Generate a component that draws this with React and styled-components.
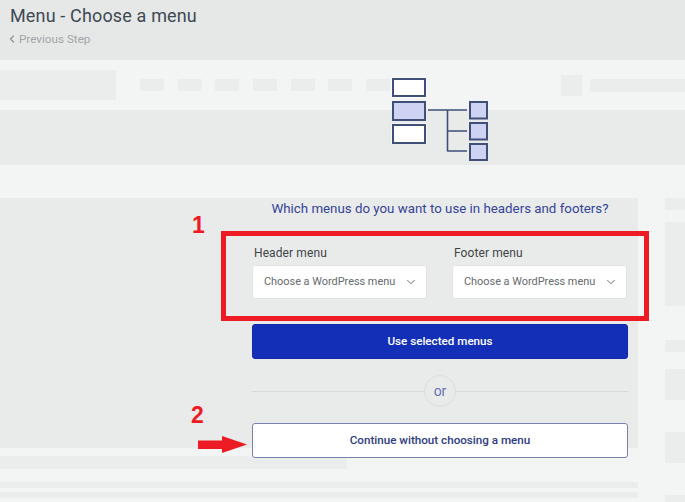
import React from "react";
import styled, { createGlobalStyle } from "styled-components";
import { ChevronDown, ChevronLeft } from "lucide-react";

const Global = createGlobalStyle`
  html, body { margin: 0; padding: 0; background: #f3f5f5; }
  * { box-sizing: border-box; }
`;

const Page = styled.div`
  position: relative;
  width: 685px;
  height: 502px;
  overflow: hidden;
  background: #f3f5f5;
  font-family: Roboto, "Liberation Sans", sans-serif;
`;

const Header = styled.header`
  height: 60px;
  padding: 5px 0 0 10px;
  background: #e6e8e8;
`;

const Title = styled.h1`
  margin: 0;
  font-size: 18px;
  line-height: 21px;
  font-weight: 400;
  letter-spacing: 0.15px;
  color: #3e4852;
`;

const BackLink = styled.a`
  display: flex;
  align-items: center;
  gap: 1px;
  margin: 4px 0 0 -4px;
  font-size: 11.7px;
  line-height: 18px;
  color: #a2a5a7;
`;

const SkeletonRow = styled.div`
  display: flex;
  align-items: center;
  height: 50px;
`;

const Skeleton = styled.div`
  flex: none;
  width: ${(p) => p.$w}px;
  height: ${(p) => p.$h}px;
  background: #ebeded;
`;

const NavGroup = styled.div`
  display: flex;
  gap: 13.7px;
  margin: 0 auto 0 24px;
`;

const RightGroup = styled.div`
  display: flex;
  align-items: center;
  gap: 8px;
`;

const Band = styled.div`
  height: 55px;
  background: #e9ebeb;
`;

const Body = styled.div`
  display: flex;
  margin-top: 33px;
`;

const LeftColumn = styled.div`
  flex: none;
  width: 638px;
`;

const Panel = styled.section`
  height: 250px;
  padding: 0 10px 0 252px;
  background: #e9ebeb;
`;

const Question = styled.p`
  margin: 0;
  padding-top: 3px;
  text-align: center;
  font-size: 13.3px;
  line-height: 16px;
  color: #35439a;
`;

const Fields = styled.div`
  display: grid;
  grid-template-columns: 175px 175px;
  column-gap: 25px;
  margin-top: 29px;
`;

const Field = styled.div`
  display: flex;
  flex-direction: column;
`;

const FieldLabel = styled.label`
  padding-left: 2px;
  font-size: 12px;
  line-height: 14px;
  letter-spacing: 0.1px;
  color: #3f4346;
  margin-bottom: 5px;
`;

const Select = styled.div`
  display: flex;
  align-items: center;
  justify-content: space-between;
  height: 34px;
  padding: 0 8px 1px 11px;
  border: 1px solid #e2e4e4;
  border-radius: 3px;
  background: #fff;
  font-size: 10.9px;
  white-space: nowrap;
  color: #666a6c;
`;

const Button = styled.button`
  display: block;
  position: relative;
  width: 100%;
  height: 35px;
  padding-bottom: 3px;
  border-radius: 3px;
  font-family: inherit;
  font-size: 11.65px;
  font-weight: 500;
  border: 1px solid ${(p) => (p.$primary ? "#1029a8" : "#7883ad")};
  background: ${(p) => (p.$primary ? "#132fb8" : "#fff")};
  color: ${(p) => (p.$primary ? "#fff" : "#2e3b82")};
`;

const PrimaryButton = styled(Button)`
  margin-top: 25px;
`;

const Divider = styled.div`
  display: flex;
  align-items: center;
  height: 32px;
  margin: 16px 0;

  &::before, &::after {
    content: "";
    flex: 1;
    height: 1px;
    background: #d6d8d9;
  }
`;

const OrBadge = styled.span`
  display: flex;
  align-items: center;
  justify-content: center;
  width: 32px;
  height: 32px;
  border: 1px solid #dcdee1;
  border-radius: 50%;
  font-size: 14px;
  color: #6672b3;
`;

const FooterStrips = styled.div`
  display: flex;
  flex-direction: column;
  padding-top: 8px;
`;

const Strip = styled.div`
  height: ${(p) => p.$h}px;
  width: ${(p) => p.$w || 638}px;
  margin-bottom: ${(p) => p.$after}px;
  background: #ebeded;
`;

const RightColumn = styled.aside`
  display: flex;
  flex-direction: column;
  margin-left: 27px;
  width: 20px;
`;

const SideBlock = styled.div`
  flex: none;
  height: ${(p) => p.$h}px;
  margin-bottom: ${(p) => p.$after}px;
  background: #ebeded;
`;

const TreeIcon = styled.svg`
  position: absolute;
  left: 390px;
  top: 76px;
`;

const Highlight = styled.div`
  position: absolute;
  left: 221px;
  top: 231px;
  width: 428px;
  height: 90px;
  border: 5px solid #ed1c24;
`;

const StepNumber = styled.span`
  position: absolute;
  left: ${(p) => p.$x}px;
  top: ${(p) => p.$y}px;
  font-family: "Liberation Sans", Arial, sans-serif;
  font-size: 23px;
  line-height: 24px;
  font-weight: 700;
  color: #ed1c24;
`;

const Arrow = styled.svg`
  position: absolute;
  left: 198px;
  top: 436px;
`;

const NAV = [0, 1, 2, 3, 4, 5, 6];

function MenuSelect({ label }) {
  return (
    <Field>
      <FieldLabel>{label}</FieldLabel>
      <Select>
        Choose a WordPress menu
        <ChevronDown size={14} strokeWidth={1.5} color="#5b5f62" />
      </Select>
    </Field>
  );
}

export default function App() {
  return (
    <Page>
      <Global />
      <Header>
        <Title>Menu - Choose a menu</Title>
        <BackLink>
          <ChevronLeft size={12} strokeWidth={2.5} color="#8f9397" />
          Previous Step
        </BackLink>
      </Header>

      <SkeletonRow>
        <Skeleton $w={116} $h={30} />
        <NavGroup>
          {NAV.map((n) => (
            <Skeleton key={n} $w={24} $h={12} />
          ))}
        </NavGroup>
        <RightGroup>
          <Skeleton $w={21} $h={21} />
          <Skeleton $w={95} $h={13} />
        </RightGroup>
      </SkeletonRow>
      <Band />

      <Body>
        <LeftColumn>
          <Panel>
            <Question>Which menus do you want to use in headers and footers?</Question>
            <Fields>
              <MenuSelect label="Header menu" />
              <MenuSelect label="Footer menu" />
            </Fields>
            <PrimaryButton $primary>Use selected menus</PrimaryButton>
            <Divider>
              <OrBadge>or</OrBadge>
            </Divider>
            <Button>Continue without choosing a menu</Button>
          </Panel>
          <FooterStrips>
            <Strip $h={13} $w={347} $after={13} />
            <Strip $h={6} $after={4} />
            <Strip $h={6} $after={4} />
          </FooterStrips>
        </LeftColumn>
        <RightColumn>
          <SideBlock $h={12} $after={12} />
          <SideBlock $h={84} $after={34} />
          <SideBlock $h={12} $after={17} />
          <SideBlock $h={31} $after={32} />
          <SideBlock $h={31} $after={32} />
          <SideBlock $h={12} $after={0} />
        </RightColumn>
      </Body>

      <TreeIcon width="100" height="86" viewBox="390 76 100 86" fill="none" aria-hidden="true">
        <g stroke="#fff" strokeWidth="1">
          <rect x="392" y="78" width="34" height="19" />
          <rect x="392" y="124" width="34" height="19" />
        </g>
        <g stroke="#3f4f78" strokeWidth="2">
          <rect x="393" y="79" width="32" height="17" fill="#fff" />
          <rect x="393" y="102" width="32" height="18" fill="#cfd3f3" />
          <rect x="393" y="125" width="32" height="18" fill="#fff" />
          <rect x="470" y="102" width="17" height="16.5" fill="#cfd3f3" />
          <rect x="470" y="123" width="17" height="16.5" fill="#cfd3f3" />
          <rect x="470" y="144" width="17" height="16" fill="#cfd3f3" />
          <path d="M428 110H467M447.500 110V151.500M447.500 131H467M447.500 151H467" strokeWidth="1.600" />
        </g>
      </TreeIcon>

      <Highlight />
      <StepNumber $x={192} $y={213}>1</StepNumber>
      <StepNumber $x={191} $y={403}>2</StepNumber>
      <Arrow width="50" height="18" viewBox="0 0 50 18" aria-hidden="true">
        <path d="M0 4.500H24V0L49 8.500 24 17V13H0Z" fill="#ed1c24" />
      </Arrow>
    </Page>
  );
}
